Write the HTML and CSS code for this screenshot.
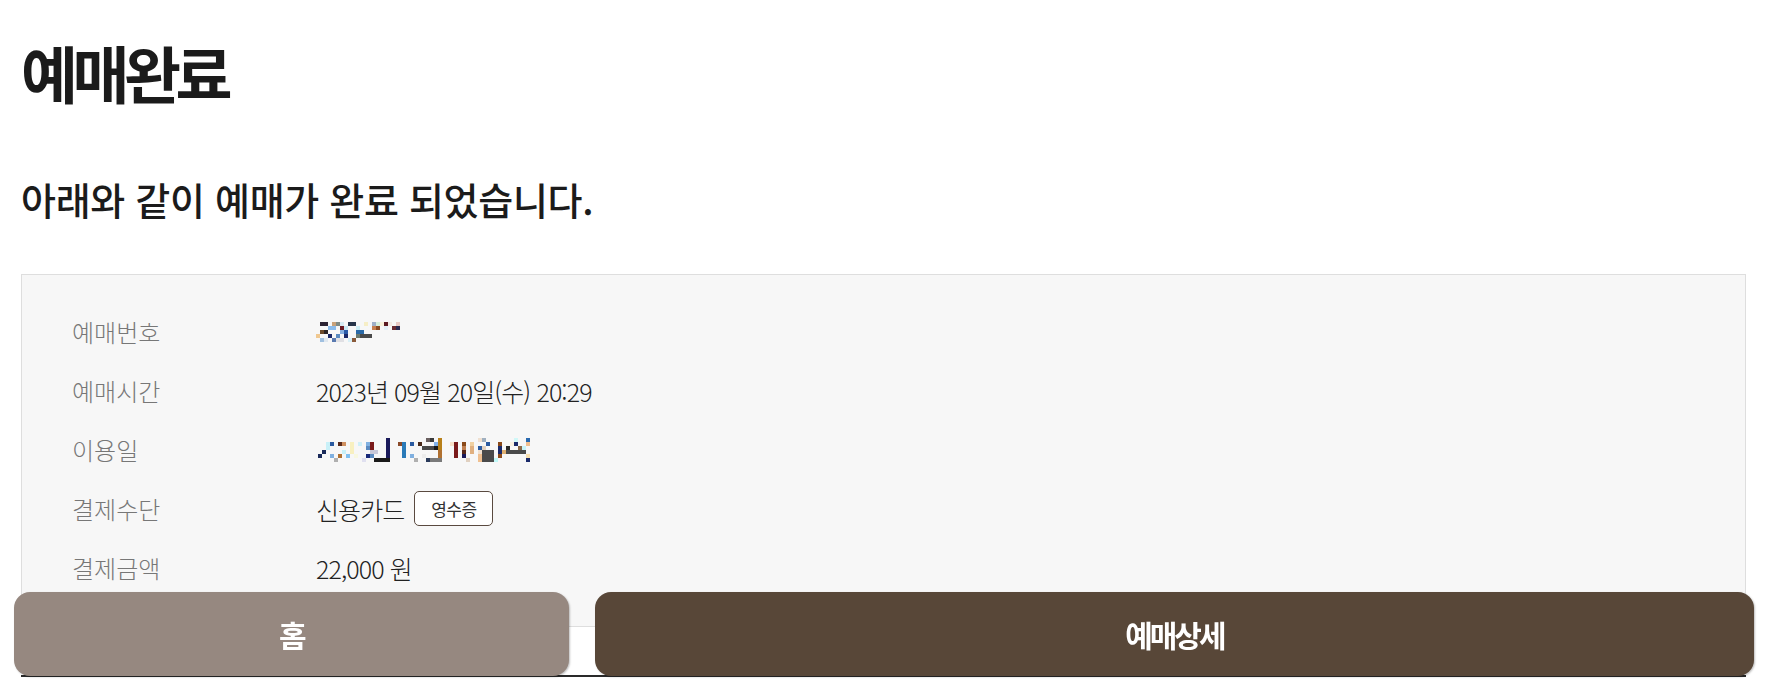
FILE: index.html
```html
<!DOCTYPE html>
<html lang="ko">
<head>
<meta charset="utf-8">
<title>예매완료</title>
<link rel="stylesheet" href="styles.css">
</head>
<body>
<main class="page">
  <h1 class="title">예매완료</h1>
  <p class="subtitle">아래와 같이 예매가 완료 되었습니다.</p>
  <section class="info">
    <div class="row">
      <span class="label">예매번호</span>
      <span class="value">
        <svg class="mosaic m1" width="88" height="20" viewBox="0 0 88 20" aria-hidden="true">
          <rect x="4" y="0" width="8" height="4" fill="#2b2233"/>
          <rect x="16" y="0" width="4" height="4" fill="#c9a27a"/>
          <rect x="20" y="0" width="4" height="4" fill="#7f8a85"/>
          <rect x="24" y="0" width="4" height="4" fill="#d6eaf2"/>
          <rect x="32" y="0" width="8" height="4" fill="#26344a"/>
          <rect x="48" y="0" width="4" height="4" fill="#f6eec6"/>
          <rect x="56" y="0" width="4" height="4" fill="#9fb0c8"/>
          <rect x="60" y="0" width="4" height="4" fill="#d6efdc"/>
          <rect x="64" y="0" width="4" height="4" fill="#f7f2dc"/>
          <rect x="68" y="0" width="4" height="4" fill="#5b1a22"/>
          <rect x="72" y="0" width="4" height="4" fill="#f3e9e4"/>
          <rect x="80" y="0" width="4" height="4" fill="#e8cac4"/>
          <rect x="12" y="4" width="8" height="4" fill="#8cbcec"/>
          <rect x="24" y="4" width="4" height="4" fill="#6b1a22"/>
          <rect x="28" y="4" width="4" height="4" fill="#c8e8f4"/>
          <rect x="40" y="4" width="4" height="4" fill="#cdeef6"/>
          <rect x="56" y="4" width="4" height="4" fill="#c68050"/>
          <rect x="60" y="4" width="4" height="4" fill="#8a4a22"/>
          <rect x="68" y="4" width="4" height="4" fill="#e4f0f6"/>
          <rect x="76" y="4" width="4" height="4" fill="#6a2a30"/>
          <rect x="80" y="4" width="4" height="4" fill="#2a2a50"/>
          <rect x="4" y="8" width="4" height="4" fill="#6b4a2a"/>
          <rect x="8" y="8" width="4" height="4" fill="#2c2424"/>
          <rect x="24" y="8" width="4" height="4" fill="#88b0e0"/>
          <rect x="28" y="8" width="4" height="4" fill="#2a5aa8"/>
          <rect x="40" y="8" width="8" height="4" fill="#2a6aa8"/>
          <rect x="0" y="12" width="4" height="4" fill="#f0c890"/>
          <rect x="12" y="12" width="4" height="4" fill="#1a2a6a"/>
          <rect x="20" y="12" width="4" height="4" fill="#5a8ac0"/>
          <rect x="28" y="12" width="4" height="4" fill="#1a2a6a"/>
          <rect x="40" y="12" width="4" height="4" fill="#6a7a70"/>
          <rect x="44" y="12" width="12" height="4" fill="#4a4a4a"/>
          <rect x="4" y="16" width="4" height="4" fill="#a0c0e0"/>
          <rect x="8" y="16" width="4" height="4" fill="#e0e8f0"/>
          <rect x="16" y="16" width="4" height="4" fill="#5a7ab0"/>
          <rect x="20" y="16" width="8" height="4" fill="#e0e0e4"/>
          <rect x="32" y="16" width="4" height="4" fill="#d8f0f8"/>
          <rect x="36" y="16" width="4" height="4" fill="#8a5a3a"/>
        </svg>
      </span>
    </div>
    <div class="row">
      <span class="label">예매시간</span>
      <span class="value">2023년 09월 20일(수) 20:29</span>
    </div>
    <div class="row">
      <span class="label">이용일</span>
      <span class="value">
        <svg class="mosaic m2" width="216" height="24" viewBox="0 0 216 24" aria-hidden="true">
          <rect x="70" y="0" width="4" height="16" fill="#1a1a5a"/>
          <rect x="110" y="0" width="4" height="4" fill="#6a6060"/>
          <rect x="114" y="0" width="4" height="4" fill="#3a3a3a"/>
          <rect x="122" y="0" width="4" height="8" fill="#b8801a"/>
          <rect x="162" y="0" width="4" height="4" fill="#f0e0d0"/>
          <rect x="166" y="0" width="4" height="4" fill="#a0b0c0"/>
          <rect x="198" y="0" width="4" height="4" fill="#d0f8f8"/>
          <rect x="210" y="0" width="4" height="4" fill="#2a6ab0"/>
          <rect x="10" y="4" width="4" height="8" fill="#c8f0f8"/>
          <rect x="14" y="4" width="4" height="4" fill="#2a5aa0"/>
          <rect x="22" y="4" width="4" height="4" fill="#5a2a1a"/>
          <rect x="26" y="4" width="4" height="4" fill="#d09060"/>
          <rect x="34" y="4" width="4" height="12" fill="#f8f0c0"/>
          <rect x="42" y="4" width="4" height="4" fill="#d0f0f8"/>
          <rect x="50" y="4" width="4" height="4" fill="#80b0e0"/>
          <rect x="54" y="4" width="4" height="8" fill="#7a1a1a"/>
          <rect x="70" y="16" width="4" height="4" fill="#1a1a5a"/>
          <rect x="82" y="4" width="4" height="4" fill="#8a4a2a"/>
          <rect x="86" y="4" width="4" height="16" fill="#2a7ab8"/>
          <rect x="94" y="4" width="4" height="4" fill="#2a5aa0"/>
          <rect x="102" y="4" width="4" height="4" fill="#4a2a1a"/>
          <rect x="118" y="4" width="4" height="4" fill="#80b0e8"/>
          <rect x="134" y="4" width="4" height="4" fill="#f8e0c8"/>
          <rect x="146" y="4" width="4" height="4" fill="#8a4a1a"/>
          <rect x="154" y="4" width="4" height="4" fill="#f0d0a0"/>
          <rect x="170" y="4" width="4" height="4" fill="#2a5aa0"/>
          <rect x="182" y="4" width="4" height="4" fill="#8a4a1a"/>
          <rect x="194" y="4" width="4" height="4" fill="#f8f0e0"/>
          <rect x="198" y="4" width="4" height="4" fill="#1a2a6a"/>
          <rect x="210" y="4" width="4" height="4" fill="#f0c090"/>
          <rect x="50" y="8" width="4" height="4" fill="#5a8ac0"/>
          <rect x="106" y="8" width="12" height="4" fill="#4a4a4a"/>
          <rect x="118" y="8" width="4" height="4" fill="#1a1a1a"/>
          <rect x="122" y="8" width="4" height="4" fill="#b8801a"/>
          <rect x="138" y="4" width="4" height="16" fill="#7a1a1a"/>
          <rect x="146" y="8" width="4" height="4" fill="#c08050"/>
          <rect x="154" y="8" width="4" height="8" fill="#e0b080"/>
          <rect x="162" y="8" width="4" height="4" fill="#2a5aa0"/>
          <rect x="166" y="8" width="4" height="4" fill="#e0d0c0"/>
          <rect x="182" y="8" width="4" height="8" fill="#1a2a6a"/>
          <rect x="190" y="8" width="4" height="4" fill="#2a2a2a"/>
          <rect x="202" y="8" width="4" height="4" fill="#8a6a4a"/>
          <rect x="206" y="8" width="4" height="4" fill="#c8f4f8"/>
          <rect x="6" y="12" width="4" height="4" fill="#1a2a5a"/>
          <rect x="26" y="12" width="4" height="4" fill="#c8f0f8"/>
          <rect x="54" y="12" width="8" height="4" fill="#c8c8d8"/>
          <rect x="122" y="12" width="4" height="8" fill="#b07030"/>
          <rect x="146" y="12" width="4" height="4" fill="#5a2a1a"/>
          <rect x="162" y="12" width="4" height="4" fill="#f0e0d0"/>
          <rect x="166" y="12" width="12" height="12" fill="#4a4a4a"/>
          <rect x="186" y="12" width="4" height="4" fill="#e0b070"/>
          <rect x="190" y="12" width="20" height="4" fill="#4a4a4a"/>
          <rect x="2" y="16" width="4" height="4" fill="#1a2a5a"/>
          <rect x="14" y="16" width="4" height="4" fill="#80b0e0"/>
          <rect x="22" y="16" width="4" height="4" fill="#b07030"/>
          <rect x="30" y="16" width="4" height="4" fill="#80c0f0"/>
          <rect x="38" y="16" width="4" height="4" fill="#f8f8e0"/>
          <rect x="50" y="16" width="4" height="4" fill="#1a2a7a"/>
          <rect x="54" y="16" width="4" height="4" fill="#5a8ac0"/>
          <rect x="94" y="16" width="4" height="4" fill="#80b0e0"/>
          <rect x="106" y="16" width="4" height="4" fill="#ececec"/>
          <rect x="146" y="16" width="4" height="4" fill="#1a1a5a"/>
          <rect x="162" y="16" width="4" height="8" fill="#f0c090"/>
          <rect x="182" y="16" width="4" height="4" fill="#8a4a1a"/>
          <rect x="210" y="16" width="4" height="4" fill="#f8e0b0"/>
          <rect x="18" y="20" width="4" height="4" fill="#b0b0b0"/>
          <rect x="46" y="20" width="4" height="4" fill="#e0e0f0"/>
          <rect x="58" y="20" width="16" height="4" fill="#1a1a1a"/>
          <rect x="98" y="20" width="4" height="4" fill="#b0b0b0"/>
          <rect x="110" y="20" width="4" height="4" fill="#2a3a5a"/>
          <rect x="114" y="20" width="12" height="4" fill="#7a7a7a"/>
          <rect x="150" y="20" width="4" height="4" fill="#e0d0c0"/>
          <rect x="178" y="20" width="4" height="4" fill="#c0f8f8"/>
          <rect x="210" y="20" width="4" height="4" fill="#1a2a6a"/>
        </svg>
      </span>
    </div>
    <div class="row">
      <span class="label">결제수단</span>
      <span class="value">신용카드 <button class="receipt" type="button">영수증</button></span>
    </div>
    <div class="row">
      <span class="label">결제금액</span>
      <span class="value">22,000 원</span>
    </div>
  </section>
  <section class="below"></section>
</main>
<nav class="actions">
  <button class="btn btn-home" type="button">홈</button>
  <button class="btn btn-detail" type="button">예매상세</button>
</nav>
</body>
</html>
```
FILE: styles.css
```css
* { box-sizing: border-box; }
html, body { margin: 0; padding: 0; background: #fff; }
body {
  font-family: "Noto Sans CJK KR", "Noto Sans", sans-serif;
  color: #1b1b1b;
}
.page {
  padding: 0 38px 0 21px;
}
.title {
  margin: 36px 0 0;
  font-size: 62px;
  line-height: 72px;
  font-weight: 700;
  letter-spacing: -5.5px;
  color: #1b1b1b;
}
.subtitle {
  margin: 67px 0 0;
  font-size: 38px;
  line-height: 48px;
  font-weight: 500;
  letter-spacing: -0.3px;
  color: #1b1b1b;
}
.info {
  margin-top: 51px;
  background: #f7f7f7;
  border: 1px solid #dedede;
  padding: 27px 50px 29px;
}
.row {
  display: flex;
  align-items: center;
  height: 59px;
}
.label {
  width: 244px;
  flex: none;
  font-size: 24px;
  font-weight: 300;
  color: #777;
}
.value {
  display: flex;
  align-items: center;
  gap: 10px;
  font-size: 25px;
  font-weight: 300;
  color: #222;
  letter-spacing: -0.9px;
}
.mosaic { display: block; }
.receipt {
  font-family: inherit;
  font-size: 17px;
  font-weight: 400;
  color: #333;
  background: #fff;
  border: 1px solid #5a4a40;
  border-radius: 5px;
  width: 79px;
  height: 35px;
  padding: 0;
  letter-spacing: -0.5px;
  cursor: pointer;
}
.below {
  margin-top: 48px;
  border-top: 2px solid #2a2a2a;
  height: 20px;
}
.actions {
  position: fixed;
  left: 14px;
  right: 30px;
  bottom: 24px;
  height: 84px;
  display: grid;
  grid-template-columns: 555fr 1160fr;
  gap: 26px;
}
.btn {
  border: none;
  border-radius: 16px;
  font-family: inherit;
  font-size: 30px;
  font-weight: 700;
  color: #fff;
  letter-spacing: -3px;
  box-shadow: 1px 1px 2px rgba(0, 0, 0, 0.25);
  cursor: pointer;
}
.btn-home { background: #968880; }
.btn-detail { background: #584738; }
```
